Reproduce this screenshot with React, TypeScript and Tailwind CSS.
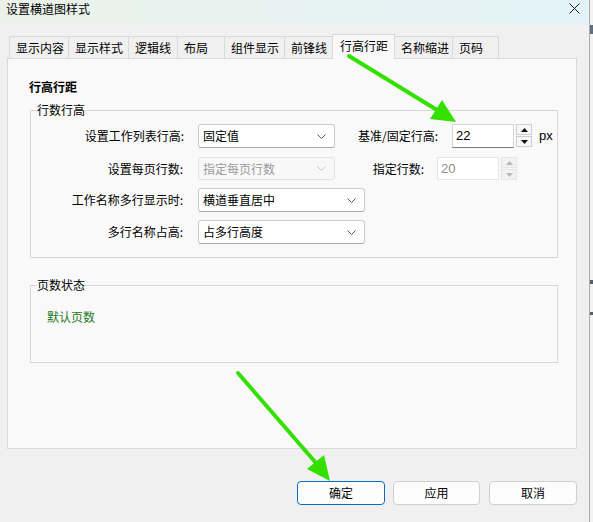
import clsx from 'clsx';

const tabs = [
  { title: '显示内容', width: 'w-[60px]' },
  { title: '显示样式', width: 'w-[61px]' },
  { title: '逻辑线', width: 'w-[50px]' },
  { title: '布局', width: 'w-[48px]' },
  { title: '组件显示', width: 'w-[61px]' },
  { title: '前锋线', width: 'w-[49px]' },
  { title: '行高行距', width: 'w-[63px]', active: true },
  { title: '名称缩进', width: 'w-[59px]' },
  { title: '页码', width: 'w-[47px]' },
];

const Chevron = ({ disabled }: { disabled?: boolean }) => (
  <svg width="9" height="5" viewBox="0 0 9 5" className="shrink-0">
    <polyline
      points="0.5,0.5 4.5,4.5 8.5,0.5"
      fill="none"
      stroke={disabled ? '#c4c4c4' : '#5c5c5c'}
      strokeWidth="1"
    />
  </svg>
);

type ComboProps = {
  value: string;
  width: string;
  disabled?: boolean;
};

const Combo = ({ value, width, disabled }: ComboProps) => (
  <div
    className={clsx(
      'flex h-full shrink-0 items-center justify-between rounded-[3px] border pr-[8px] pl-[4px] leading-4',
      width,
      disabled
        ? 'border-[#e2e2e2] bg-[#f8f8f8] text-[#9a9a9a]'
        : 'border-[#cacaca] border-b-[#a8a8a8] bg-white text-black',
    )}
  >
    <span>{value}</span>
    <Chevron disabled={disabled} />
  </div>
);

const Triangle = ({ up, disabled }: { up?: boolean; disabled?: boolean }) => (
  <svg width="7" height="4" viewBox="0 0 7 4">
    <polygon
      points={up ? '3.5,0 7,4 0,4' : '0,0 7,0 3.5,4'}
      fill={disabled ? '#b8b8b8' : '#111111'}
    />
  </svg>
);

type SpinBoxProps = {
  value: string;
  disabled?: boolean;
};

const SpinBox = ({ value, disabled }: SpinBoxProps) => (
  <div className="flex h-full shrink-0">
    <div
      className={clsx(
        'flex w-[62px] items-center border pl-[3px] font-["Liberation_Sans",sans-serif] text-[13px]',
        disabled
          ? 'border-[#e6e6e6] bg-white text-[#8c8c8c]'
          : 'border-[#d6d6d6] border-b-[#7a7a7a] bg-white text-black',
      )}
    >
      {value}
    </div>
    <div className="ml-[2px] flex w-[16px] flex-col gap-px">
      <div
        className={clsx(
          'flex h-[11px] items-center justify-center border',
          disabled ? 'border-[#e6e6e6] bg-[#f2f2f2]' : 'border-[#cfcfcf] bg-[#f7f7f7]',
        )}
      >
        <Triangle up disabled={disabled} />
      </div>
      <div
        className={clsx(
          'flex h-[11px] items-center justify-center border',
          disabled ? 'border-[#e6e6e6] bg-[#f2f2f2]' : 'border-[#cfcfcf] bg-[#f7f7f7]',
        )}
      >
        <Triangle disabled={disabled} />
      </div>
    </div>
  </div>
);

// green annotation arrows drawn over the dialog
const Arrows = () => (
  <svg className="pointer-events-none absolute inset-0 z-20" width="593" height="522">
    <line x1="349" y1="56" x2="437" y2="110" stroke="#33e000" strokeWidth="4" strokeLinecap="round" />
    <polygon points="456,122 430,119 442,100" fill="#33e000" />
    <line x1="238" y1="373" x2="316" y2="463" stroke="#33e000" strokeWidth="4" strokeLinecap="round" />
    <polygon points="330,481 307,469 324,455" fill="#33e000" />
  </svg>
);

const DialogButton = ({ label, primary, className }: { label: string; primary?: boolean; className?: string }) => (
  <button
    className={clsx(
      'flex h-[24px] items-center justify-center rounded-[4px] border bg-[#fdfdfd] leading-4 text-black',
      primary ? 'border-[#0a6cc4]' : 'border-[#d0d0d0]',
      className,
    )}
  >
    {label}
  </button>
);

export default function App() {
  return (
    <div className='relative flex h-[522px] w-[593px] overflow-hidden bg-[#f0f0f0] font-["Noto_Sans_CJK_SC","Liberation_Sans",sans-serif] text-[12px] text-black'>
      <div className="flex w-[590px] shrink-0 flex-col border-r border-[#acacac]">
        <header className="flex h-[24px] items-start justify-between bg-linear-to-r from-[#ebf2ea] to-[#e3f3f8] pr-[9px] pl-[6px]">
          <span className="pt-px leading-4">设置横道图样式</span>
          <svg width="11" height="11" viewBox="0 0 11 11" className="mt-[3px]">
            <path d="M0.5 0.5 L10.5 10.5 M10.5 0.5 L0.5 10.5" stroke="#1a1a1a" strokeWidth="1" />
          </svg>
        </header>

        <div className="flex flex-1 flex-col px-[7px] pt-[10px]">
          <div className="relative z-10 flex h-[25px] items-end pl-[2px]">
            {tabs.map((tab, i) =>
              tab.active ? (
                <div
                  key={tab.title}
                  className={clsx(
                    'relative z-10 -ml-px flex h-[25px] items-center border border-b-0 border-[#d9d9d9] bg-[#f9f9f9] pb-[2px] pl-[7px] leading-4',
                    tab.width,
                  )}
                >
                  {tab.title}
                </div>
              ) : (
                <div
                  key={tab.title}
                  className={clsx(
                    'mb-px flex h-[22px] items-center border border-b-0 border-[#d9d9d9] bg-[#f0f0f0] pl-[6px] leading-4',
                    i > 0 && '-ml-px',
                    tab.width,
                  )}
                >
                  {tab.title}
                </div>
              ),
            )}
          </div>

          <div className="-mt-px h-[391px] w-[570px] border border-[#dadada] bg-[#f9f9f9]">
            <div className="pt-[20px] pl-[21px] leading-4 font-bold">行高行距</div>

            <fieldset className="mt-[7px] ml-[22px] w-[528px] border border-[#d6d6d6] pt-[6px] pb-[13px]">
              <legend className="ml-[6px] leading-4">行数行高</legend>

              <div className="flex h-[24px] items-center">
                <span className="w-[153px] shrink-0 text-right leading-4">设置工作列表行高: </span>
                <div className="ml-[14px] h-full">
                  <Combo value="固定值" width="w-[137px]" />
                </div>
                <span className="ml-[19px] w-[84px] shrink-0 text-right leading-4">基准/固定行高:</span>
                <div className="ml-[14px] h-full">
                  <SpinBox value="22" />
                </div>
                <span className='ml-[7px] font-["Liberation_Sans",sans-serif] text-[13px] leading-4'>px</span>
              </div>

              <div className="mt-[9px] flex h-[23px] items-center">
                <span className="w-[152px] shrink-0 text-right leading-4">设置每页行数:</span>
                <div className="ml-[15px] h-full">
                  <Combo value="指定每页行数" width="w-[137px]" disabled />
                </div>
                <span className="ml-[34px] w-[55px] shrink-0 text-right leading-4">指定行数:</span>
                <div className="ml-[13px] h-full">
                  <SpinBox value="20" disabled />
                </div>
              </div>

              <div className="mt-[8px] flex h-[24px] items-center">
                <span className="w-[152px] shrink-0 text-right leading-4">工作名称多行显示时:</span>
                <div className="ml-[15px] h-full">
                  <Combo value="横道垂直居中" width="w-[167px]" />
                </div>
              </div>

              <div className="mt-[8px] flex h-[24px] items-center">
                <span className="w-[152px] shrink-0 text-right leading-4">多行名称占高:</span>
                <div className="ml-[15px] h-full">
                  <Combo value="占多行高度" width="w-[167px]" />
                </div>
              </div>
            </fieldset>

            <fieldset className="mt-[19px] ml-[22px] w-[528px] border border-[#d6d6d6] pt-[16px] pb-[37px]">
              <legend className="ml-[6px] leading-4">页数状态</legend>
              <div className="pl-[16px] leading-4 text-[#1f7a24]">默认页数</div>
            </fieldset>
          </div>

          <div className="mt-[32px] flex justify-end pr-[5px]">
            <DialogButton label="确定" primary className="w-[88px]" />
            <DialogButton label="应用" className="ml-[8px] w-[87px]" />
            <DialogButton label="取消" className="ml-[9px] w-[88px]" />
          </div>
        </div>
      </div>

      {/* strip of the window lying behind the dialog */}
      <div className="flex flex-1 flex-col bg-[#f2f2f2]">
        <div className="mt-[25px] h-[9px] bg-[#5d6f80]" />
        <div className="mt-[246px] h-[4px] bg-[#50606e]" />
        <div className="mt-[28px] h-[3px] bg-[#50606e]" />
      </div>

      <Arrows />
    </div>
  );
}
